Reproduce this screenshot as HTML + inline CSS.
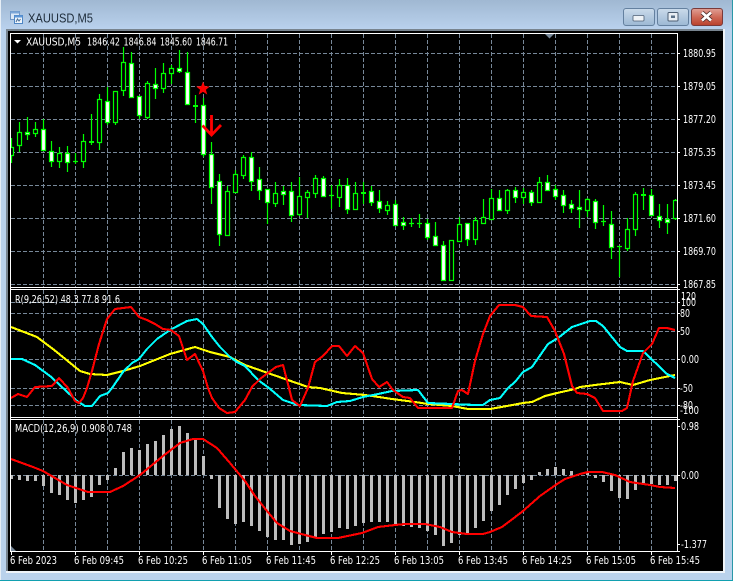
<!DOCTYPE html>
<html><head><meta charset="utf-8"><title>XAUUSD,M5</title>
<style>
html,body{margin:0;padding:0;background:#fff}
body{width:735px;height:582px;overflow:hidden;position:relative}
svg{position:absolute;left:0;top:0;display:block}
text{font-family:"DejaVu Sans",sans-serif;fill:#fff;font-size:10.5px}
</style></head><body>
<svg width="735" height="582" viewBox="0 0 735 582" xmlns="http://www.w3.org/2000/svg">
<defs>
<linearGradient id="tb" x1="0" y1="0" x2="0" y2="1"><stop offset="0" stop-color="#a0b8d2"/><stop offset="1" stop-color="#bad2ee"/></linearGradient>
<linearGradient id="bt" x1="0" y1="0" x2="0" y2="1"><stop offset="0" stop-color="#cbdbeb"/><stop offset=".5" stop-color="#b3c9df"/><stop offset="1" stop-color="#9cb8d4"/></linearGradient>
<linearGradient id="cl" x1="0" y1="0" x2="0" y2="1"><stop offset="0" stop-color="#e0a096"/><stop offset=".5" stop-color="#cf6a58"/><stop offset="1" stop-color="#b8402c"/></linearGradient>
<clipPath id="mp"><rect x="11" y="34" width="666" height="253"/></clipPath>
<clipPath id="rp"><rect x="11" y="290" width="666" height="127"/></clipPath>
<clipPath id="cp"><rect x="11" y="420" width="666" height="131"/></clipPath>
</defs>
<!-- frame -->
<rect width="735" height="582" fill="#bad2ec"/>
<rect width="735" height="30" fill="url(#tb)"/>
<rect x="0" y="0" width="1" height="581" fill="#e6eef6"/>
<rect x="732" y="0" width="1" height="581" fill="#2a98a8"/>
<rect x="733" y="0" width="2" height="582" fill="#fff"/>
<rect x="0" y="580" width="733" height="1" fill="#12a0b0"/>
<rect x="0" y="581" width="735" height="1" fill="#fff"/>
<rect x="6" y="29" width="719" height="544" fill="#eef3f8"/>
<rect x="6" y="29" width="717" height="2" fill="#78848f"/>
<rect x="6" y="29" width="2" height="542" fill="#78848f"/>
<rect x="8" y="31" width="715" height="540" fill="#000"/>
<!-- title -->
<g shape-rendering="crispEdges">
<rect x="10.5" y="11.5" width="9" height="8" fill="#dce8f6" stroke="#6f95c4"/>
<rect x="10.5" y="11.5" width="9" height="2" fill="#7ba6d8"/>
<rect x="14.5" y="15.5" width="8" height="8" fill="#f0f6fc" stroke="#4f86c4"/>
<rect x="14.5" y="15.5" width="8" height="2" fill="#5d97d8"/>
</g>
<path d="M16 22l1.500-3 1.500 2 1.500-2" stroke="#4a6f98" fill="none"/>
<text x="28" y="22.500" textLength="65" lengthAdjust="spacingAndGlyphs" style="font-family:'Liberation Sans',sans-serif;font-size:12.500px;fill:#1e2c3a">XAUUSD,M5</text>
<!-- buttons -->
<rect x="623.500" y="8.500" width="31" height="17" rx="2.500" fill="url(#bt)" stroke="#64809f"/>
<rect x="633" y="15.500" width="11" height="5.500" rx="1" fill="#eef2f6" stroke="#4d5f74" stroke-width=".8"/>
<rect x="657.500" y="8.500" width="31" height="17" rx="2.500" fill="url(#bt)" stroke="#64809f"/>
<rect x="668" y="12.500" width="10" height="8.500" rx="1" fill="#e8eef4" stroke="#4d5f74"/>
<rect x="671" y="15.500" width="4" height="2.500" fill="#5a7088"/>
<rect x="691.500" y="8.500" width="31" height="17" rx="2.500" fill="url(#cl)" stroke="#7a3a3a"/>
<path d="M702 12.500l9 8M711 12.500l-9 8" stroke="#4a2a28" stroke-width="4.200"/>
<path d="M702 12.500l9 8M711 12.500l-9 8" stroke="#fff" stroke-width="2.800"/>
<!-- grid -->
<g fill="none" stroke="#778899" stroke-dasharray="4 2" shape-rendering="crispEdges">
<path d="M11 53.500H677M11 86.500H677M11 119.500H677M11 152.500H677M11 185.500H677M11 218.500H677M11 251.500H677M11 284.500H677"/>
<path d="M43.500 34V287M75.500 34V287M107.500 34V287M139.500 34V287M171.500 34V287M203.500 34V287M235.500 34V287M267.500 34V287M299.500 34V287M331.500 34V287M363.500 34V287M395.500 34V287M427.500 34V287M459.500 34V287M491.500 34V287M523.500 34V287M555.500 34V287M587.500 34V287M619.500 34V287M651.500 34V287"/>
<path d="M11 302.500H677M11 313.500H677M11 331.500H677M11 359.500H677M11 388.500H677M11 405.500H677"/>
<path d="M43.500 290V417M75.500 290V417M107.500 290V417M139.500 290V417M171.500 290V417M203.500 290V417M235.500 290V417M267.500 290V417M299.500 290V417M331.500 290V417M363.500 290V417M395.500 290V417M427.500 290V417M459.500 290V417M491.500 290V417M523.500 290V417M555.500 290V417M587.500 290V417M619.500 290V417M651.500 290V417"/>
<path d="M11 475.500H677"/>
<path d="M43.500 420V551M75.500 420V551M107.500 420V551M139.500 420V551M171.500 420V551M203.500 420V551M235.500 420V551M267.500 420V551M299.500 420V551M331.500 420V551M363.500 420V551M395.500 420V551M427.500 420V551M459.500 420V551M491.500 420V551M523.500 420V551M555.500 420V551M587.500 420V551M619.500 420V551M651.500 420V551"/>
</g>
<!-- candles -->
<g clip-path="url(#mp)" fill="none" stroke="#0f0" stroke-width="1.200">
<path d="M11.500 138V163M19.500 122V152M27.500 117V140M35.500 122V137M43.500 119V151M51.500 141V167M59.500 147V168M67.500 146V172M75.500 153V164M83.500 134V168M91.500 114V145M99.500 94V150M107.500 87V125M115.500 91V125M123.500 47V96M131.500 52V98M139.500 96V119M147.500 81V119M155.500 68V99M163.500 63V93M171.500 65V84M179.500 50V73M187.500 52V105M195.500 95V123M203.500 98V157M211.500 142V204M219.500 174V246M227.500 186V235M235.500 170V192M243.500 155V179M251.500 152V191M259.500 167V200M267.500 189V224M275.500 182V207M283.500 186V205M291.500 182V222M299.500 177V216M307.500 190V218M315.500 175V198M323.500 176V197M331.500 185V209M339.500 179V207M347.500 178V214M355.500 182V210M363.500 182V204M371.500 186V206M379.500 190V213M387.500 201V215M395.500 200V225M403.500 217V230M411.500 218V227M419.500 214V228M427.500 219V240M435.500 222V245M443.500 241V280M459.500 217V241M467.500 223V246M475.500 217V245M483.500 199V223M491.500 189V219M499.500 190V210M507.500 189V214M515.500 187V203M523.500 188V204M531.500 190V206M539.500 177V202M547.500 175V191M555.500 185V200M563.500 190V213M571.500 200V213M579.500 190V228M587.500 198V217M595.500 199V229M603.500 205V226M611.500 211V259M619.500 246V277M627.500 218V251M635.500 192V236M643.500 188V210M651.500 189V215M659.500 204V228M667.500 204V234M675.500 199V220"/>
<path d="M73 161.500H78M329 195.500H334M409 223.500H414M417 223.500H422M601 221.500H606M617 246.500H622"/>
<path stroke-width="2" d="M89 142H94M193 106H198M361 193H366M641 195H646"/>
<path fill="#000" d="M9.500 147.500h4v8h-4zM17.500 132.500h4v13h-4zM33.500 129.500h4v4h-4zM57.500 153.500h4v8h-4zM81.500 141.500h4v20h-4zM97.500 99.500h4v43h-4zM113.500 91.500h4v31h-4zM121.500 62.500h4v28h-4zM145.500 83.500h4v34h-4zM161.500 73.500h4v15h-4zM169.500 68.500h4v5h-4zM225.500 191.500h4v44h-4zM233.500 174.500h4v18h-4zM241.500 157.500h4v18h-4zM273.500 193.500h4v10h-4zM297.500 196.500h4v18h-4zM305.500 192.500h4v5h-4zM313.500 178.500h4v15h-4zM337.500 185.500h4v12h-4zM353.500 193.500h4v16h-4zM385.500 205.500h4v5h-4zM449.500 240.500h4v40h-4zM457.500 224.500h4v17h-4zM473.500 220.500h4v19h-4zM481.500 217.500h4v6h-4zM489.500 198.500h4v21h-4zM505.500 190.500h4v20h-4zM521.500 192.500h4v5h-4zM537.500 182.500h4v20h-4zM585.500 199.500h4v11h-4zM625.500 229.500h4v19h-4zM633.500 194.500h4v35h-4zM673.500 200.500h4v18h-4z"/>
<path fill="#fff" d="M25.500 132.500h4v2h-4zM41.500 129.500h4v21h-4zM49.500 151.500h4v10h-4zM65.500 153.500h4v9h-4zM105.500 101.500h4v21h-4zM129.500 63.500h4v34h-4zM137.500 96.500h4v19h-4zM153.500 84.500h4v4h-4zM177.500 68.500h4v3h-4zM185.500 72.500h4v32h-4zM201.500 105.500h4v49h-4zM209.500 154.500h4v33h-4zM217.500 181.500h4v53h-4zM249.500 157.500h4v24h-4zM257.500 179.500h4v11h-4zM265.500 189.500h4v13h-4zM281.500 191.500h4v3h-4zM289.500 191.500h4v24h-4zM321.500 178.500h4v18h-4zM345.500 185.500h4v24h-4zM369.500 191.500h4v11h-4zM377.500 201.500h4v7h-4zM393.500 204.500h4v21h-4zM401.500 222.500h4v3h-4zM425.500 223.500h4v14h-4zM433.500 236.500h4v9h-4zM441.500 245.500h4v35h-4zM465.500 223.500h4v16h-4zM497.500 198.500h4v12h-4zM513.500 190.500h4v7h-4zM529.500 192.500h4v10h-4zM545.500 182.500h4v8h-4zM553.500 189.500h4v7h-4zM561.500 195.500h4v10h-4zM569.500 204.500h4v4h-4zM577.500 207.500h4v2h-4zM593.500 201.500h4v21h-4zM609.500 224.500h4v23h-4zM649.500 195.500h4v20h-4zM657.500 216.500h4v4h-4zM665.500 219.500h4v3h-4z"/>
</g>
<!-- star & arrow -->
<path d="M203 81.500l1.800 4.800 5 .2-3.900 3.200 1.400 4.900-4.300-2.800-4.300 2.800 1.400-4.900-3.900-3.200 5-.2z" fill="#f00"/>
<path d="M211.500 115V134M202.500 125.500L211.500 135L221 125" fill="none" stroke="#f00" stroke-width="2.800"/>
<!-- R lines -->
<g clip-path="url(#rp)" fill="none" stroke-width="2.100" stroke-linejoin="round" shape-rendering="crispEdges">
<path stroke="#ff0" d="M11 327L37 337L53 349L80 371L90 374L107 375L123 371L140 366L170 354L195 347L210 352L230 357L245 365L265 372L285 379L308 387L320 388L342 393L365 395L372 396L392 399L415 402L428 404L452 406L468 409L490 409L507 406L523 403L532 402L545 396L557 393L575 389L580 387L595 385L620 382L633 385L650 380L675 375"/>
<path stroke="#0ff" d="M11 359L22 359L35 365L50 376L63 388L77 401L85 406L92 406L100 396L108 393L112 388L123 372L132 363L139 359L147 349L157 339L170 330L187 321L197 319L203 324L212 337L220 347L230 357L237 362L245 366L258 380L269 388L283 400L298 405L327 406L337 402L350 401L363 397L378 394L392 391L418 390L428 403L475 405L483 405L490 400L500 398L508 388L515 382L523 372L532 367L548 344L558 338L572 327L590 321L596 321L603 326L620 347L627 351L643 351L667 374L675 378"/>
<path stroke="#f00" d="M11 398L18 394L27 397L35 387L52 386L59 378L68 388L75 401L79 403L83 398L87 388L92 371L99 344L107 319L115 309L123 308L131 307L139 317L147 320L155 324L163 329L171 330L179 336L187 360L195 354L203 371L208 388L212 398L219 408L227 413L235 412L245 400L252 387L260 379L268 373L276 367L283 365L289 388L292 400L300 406L308 388L315 362L323 356L332 346L339 346L347 356L355 346L363 353L372 379L379 387L387 382L393 390L403 397L410 398L418 408L452 408L458 391L462 390L468 394L475 361L483 334L490 316L499 305L515 305L523 307L531 316L547 317L555 331L564 354L572 386L577 393L587 394L595 398L603 411L622 411L627 408L633 381L643 353L652 344L659 328L667 328L675 330"/>
</g>
<!-- MACD histogram -->
<g clip-path="url(#cp)" stroke="#bdbdbd" stroke-width="3" fill="none" shape-rendering="crispEdges">
<path d="M11.500 475V479M19.500 475V480M27.500 475V481M35.500 475V481M43.500 475V486M51.500 475V493M59.500 475V495M67.500 475V500M75.500 475V503M83.500 475V500M91.500 475V497M99.500 475V485M107.500 475V480M115.500 475V468M123.500 475V452M131.500 475V448M139.500 475V450M147.500 475V444M155.500 475V441M163.500 475V435M171.500 475V429M179.500 475V426M187.500 475V433M195.500 475V439M203.500 475V456M211.500 475V479M219.500 475V508M227.500 475V519M235.500 475V524M243.500 475V522M251.500 475V526M259.500 475V531M267.500 475V537M275.500 475V540M283.500 475V540M291.500 475V545M299.500 475V544M307.500 475V542M315.500 475V537M323.500 475V534M331.500 475V532M339.500 475V528M347.500 475V529M355.500 475V526M363.500 475V523M371.500 475V522M379.500 475V522M387.500 475V522M395.500 475V524M403.500 475V526M411.500 475V527M419.500 475V528M427.500 475V531M435.500 475V535M443.500 475V546M451.500 475V543M459.500 475V535M467.500 475V533M475.500 475V528M483.500 475V521M491.500 475V511M499.500 475V505M507.500 475V495M515.500 475V489M523.500 475V483M531.500 475V480M539.500 475V472M547.500 475V469M555.500 475V467M563.500 475V469M571.500 475V471M587.500 475V473M595.500 475V478M603.500 475V482M611.500 475V491M619.500 475V498M627.500 475V499M635.500 475V490M643.500 475V485M651.500 475V484M659.500 475V485M667.500 475V485M675.500 475V481"/>
<path stroke="#f00" stroke-width="2.100" stroke-linejoin="round" d="M11 459L33 467L43 471L67 485L88 492L110 492L123 486L140 475L163 456L180 443L193 439L203 439L217 448L230 463L245 481L255 496L267 511L277 523L290 531L305 535L317 538L338 538L362 533L378 527L395 525L405 524L425 524L440 527L452 532L467 534L483 534L490 532L502 527L510 521L523 511L540 496L557 484L565 479L580 474L588 472L602 472L615 475L630 482L650 485L660 487L675 488"/>
</g>
<path d="M11 546L16 551H11z" fill="#778899"/>
<path d="M545 34H554L549.500 38.500z" fill="#778899"/>
<!-- axis lines -->
<g fill="none" stroke="#fff" shape-rendering="crispEdges">
<path d="M10.500 33V551.500M10 33.500H677.500V551.500M10 287.500H678M10 289.500H680M10 417.500H678M10 419.500H680M10 551.500H680"/>
<path d="M677 53.500h3M677 86.500h3M677 119.500h3M677 152.500h3M677 185.500h3M677 218.500h3M677 251.500h3M677 284.500h3M677 302.500h3M677 313.500h3M677 331.500h3M677 359.500h3M677 388.500h3M677 405.500h3M677 426.500h3M677 475.500h3M677 544.500h3"/>
<path d="M11.500 551V555M75.500 551V555M139.500 551V555M203.500 551V555M267.500 551V555M331.500 551V555M395.500 551V555M459.500 551V555M523.500 551V555M587.500 551V555M651.500 551V555"/>
</g>
<!-- labels -->
<path d="M14 40H21L17.500 43.500z" fill="#fff"/>
<text x="26" y="45.500" textLength="55" lengthAdjust="spacingAndGlyphs">XAUUSD,M5</text>
<text x="87" y="45.500" textLength="33" lengthAdjust="spacingAndGlyphs">1846.42</text>
<text x="123.500" y="45.500" textLength="33" lengthAdjust="spacingAndGlyphs">1846.84</text>
<text x="160" y="45.500" textLength="32" lengthAdjust="spacingAndGlyphs">1845.60</text>
<text x="196" y="45.500" textLength="32" lengthAdjust="spacingAndGlyphs">1846.71</text>
<text x="683" y="57" textLength="33" lengthAdjust="spacingAndGlyphs">1880.95</text>
<text x="683" y="90" textLength="33" lengthAdjust="spacingAndGlyphs">1879.05</text>
<text x="683" y="123" textLength="33" lengthAdjust="spacingAndGlyphs">1877.20</text>
<text x="683" y="156" textLength="33" lengthAdjust="spacingAndGlyphs">1875.35</text>
<text x="683" y="189" textLength="33" lengthAdjust="spacingAndGlyphs">1873.45</text>
<text x="683" y="222" textLength="33" lengthAdjust="spacingAndGlyphs">1871.60</text>
<text x="683" y="255" textLength="33" lengthAdjust="spacingAndGlyphs">1869.70</text>
<text x="683" y="288" textLength="33" lengthAdjust="spacingAndGlyphs">1867.85</text>
<text x="15" y="303" textLength="105" lengthAdjust="spacingAndGlyphs">R(9,26,52) 48.3 77.8 91.6</text>
<text x="15" y="432" textLength="117" lengthAdjust="spacingAndGlyphs">MACD(12,26,9) 0.908 0.748</text>
<text x="681" y="300" textLength="15" lengthAdjust="spacingAndGlyphs">120</text>
<text x="681" y="306" textLength="15" lengthAdjust="spacingAndGlyphs">100</text>
<text x="680" y="317" textLength="10" lengthAdjust="spacingAndGlyphs">80</text>
<text x="680" y="335" textLength="10" lengthAdjust="spacingAndGlyphs">50</text>
<text x="681" y="363" textLength="18" lengthAdjust="spacingAndGlyphs">0.00</text>
<text x="680" y="392" textLength="13" lengthAdjust="spacingAndGlyphs">-50</text>
<text x="680" y="409" textLength="13" lengthAdjust="spacingAndGlyphs">-80</text>
<text x="680" y="414" textLength="19" lengthAdjust="spacingAndGlyphs">-100</text>
<text x="681" y="430" textLength="18" lengthAdjust="spacingAndGlyphs">0.98</text>
<text x="681" y="479" textLength="18" lengthAdjust="spacingAndGlyphs">0.00</text>
<text x="681" y="548" textLength="26" lengthAdjust="spacingAndGlyphs">-1.377</text>
<text x="10" y="564" textLength="47" lengthAdjust="spacingAndGlyphs">6 Feb 2023</text>
<text x="74" y="564" textLength="50" lengthAdjust="spacingAndGlyphs">6 Feb 09:45</text>
<text x="138" y="564" textLength="50" lengthAdjust="spacingAndGlyphs">6 Feb 10:25</text>
<text x="202" y="564" textLength="50" lengthAdjust="spacingAndGlyphs">6 Feb 11:05</text>
<text x="266" y="564" textLength="50" lengthAdjust="spacingAndGlyphs">6 Feb 11:45</text>
<text x="330" y="564" textLength="50" lengthAdjust="spacingAndGlyphs">6 Feb 12:25</text>
<text x="394" y="564" textLength="50" lengthAdjust="spacingAndGlyphs">6 Feb 13:05</text>
<text x="458" y="564" textLength="50" lengthAdjust="spacingAndGlyphs">6 Feb 13:45</text>
<text x="522" y="564" textLength="50" lengthAdjust="spacingAndGlyphs">6 Feb 14:25</text>
<text x="586" y="564" textLength="50" lengthAdjust="spacingAndGlyphs">6 Feb 15:05</text>
<text x="650" y="564" textLength="50" lengthAdjust="spacingAndGlyphs">6 Feb 15:45</text>
</svg>
</body></html>
